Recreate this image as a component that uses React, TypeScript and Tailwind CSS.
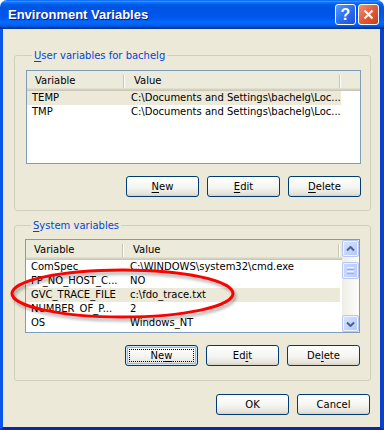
import React from "react"

const font = "font-['Tahoma','DejaVu_Sans',Verdana,sans-serif]"

interface Row {
  name: string
  value: string
  selected?: boolean
}

const userVars: Row[] = [
  { name: "TEMP", value: "C:\\Documents and Settings\\bachelg\\Loc...", selected: true },
  { name: "TMP", value: "C:\\Documents and Settings\\bachelg\\Loc..." },
]

const systemVars: Row[] = [
  { name: "ComSpec", value: "C:\\WINDOWS\\system32\\cmd.exe" },
  { name: "FP_NO_HOST_C...", value: "NO" },
  { name: "GVC_TRACE_FILE", value: "c:\\fdo_trace.txt", selected: true },
  { name: "NUMBER_OF_P...", value: "2" },
  { name: "OS", value: "Windows_NT" },
]

function Separator() {
  return <span className="absolute right-0 top-[4px] h-[13px] w-[2px] border-l border-[#c7c5b2] bg-white" />
}

function ListHeader() {
  return (
    <div className="flex h-[20px] leading-[19px] bg-[linear-gradient(to_bottom,#ebeadb_0,#ebeadb_17px,#e2decd_17px,#e2decd_18px,#d6d2c2_18px,#d6d2c2_19px,#cbc7b8_19px)]">
      <div className="relative w-[98px] pl-[8px]">
        Variable
        <Separator />
      </div>
      <div className="relative w-[216px] pl-[9px]">
        Value
        <Separator />
      </div>
      <div className="flex-1" />
    </div>
  )
}

function ListRows({ rows }: { rows: Row[] }) {
  return (
    <div className="flex flex-col">
      {rows.map(r => (
        <div
          key={r.name}
          className={`flex h-[14px] w-[314px] leading-[14px] ${r.selected ? "bg-[#ece9d8]" : ""}`}
        >
          <div className="w-[98px] overflow-hidden whitespace-nowrap pl-[5px]">{r.name}</div>
          <div className="w-[216px] overflow-hidden whitespace-nowrap pl-[6px]">{r.value}</div>
        </div>
      ))}
    </div>
  )
}

function ScrollButton({ down }: { down?: boolean }) {
  return (
    <div className="flex h-[17px] w-[17px] items-center justify-center rounded-[2px] border border-[#b7c9f2] bg-[linear-gradient(to_bottom_right,#d8e4fd,#c1d3fb_60%,#b2c6f5)] shadow-[inset_0_0_0_1px_#eef3fe]">
      <svg width="9" height="6" viewBox="0 0 9 6">
        <path
          d={down ? "M1 1.5 L4.5 5 L8 1.5" : "M1 4.5 L4.5 1 L8 4.5"}
          stroke="#4d6185"
          strokeWidth="2"
          fill="none"
        />
      </svg>
    </div>
  )
}

function Scrollbar() {
  return (
    <div className="flex w-[17px] flex-col bg-[linear-gradient(to_right,#eeede5,#fdfdfa)]">
      <ScrollButton />
      <div className="flex-1">
        <div className="mt-[5px] flex h-[17px] w-[17px] flex-col items-center justify-center gap-[1px] rounded-[2px] border border-[#b7c9f2] bg-[linear-gradient(to_right,#c9d8fc,#bccffb)] shadow-[inset_0_0_0_1px_#eef3fe]">
          <span className="h-px w-[7px] bg-[#eef3fe]" />
          <span className="h-px w-[7px] bg-[#8cb0f8]" />
          <span className="h-px w-[7px] bg-[#eef3fe]" />
          <span className="h-px w-[7px] bg-[#8cb0f8]" />
        </div>
      </div>
      <ScrollButton down />
    </div>
  )
}

function XPButton({ children, focused }: { children: React.ReactNode; focused?: boolean }) {
  return (
    <div
      className={`relative flex h-[21px] w-[73px] items-center justify-center rounded-[3px] border border-[#003c74] bg-[linear-gradient(to_bottom,#ffffff,#f4f4f0_55%,#e6e3da_88%,#d6d0c5)] leading-[13px] ${
        focused ? "shadow-[inset_0_0_0_1px_#cee7ff,inset_0_0_0_2px_#98b8ea]" : ""
      }`}
    >
      {focused && <span className="absolute inset-[3px] border border-dotted border-[#000]" />}
      <span>{children}</span>
    </div>
  )
}

function U({ children }: { children: React.ReactNode }) {
  return <span className="underline underline-offset-[2px]">{children}</span>
}

export default function App() {
  return (
    <div className={`relative h-[430px] w-[384px] overflow-hidden bg-white text-[10px] text-black ${font}`}>
      <div className="flex h-full flex-col">
        {/* Title bar */}
        <div className="flex h-[29px] items-center rounded-t-[7px] bg-[linear-gradient(to_bottom,#0058ee_0%,#3593ff_4%,#288eff_6%,#127dff_8%,#036ffc_10%,#0262ee_14%,#0057e5_20%,#0054e3_24%,#0055eb_56%,#005bf5_66%,#026afe_76%,#0062ef_86%,#0052d6_92%,#0040ab_94%,#003092_100%)] pl-[8px] pr-[5px]">
          <span className="flex-1 pt-[1px] font-['Trebuchet_MS','Liberation_Sans',Arial,sans-serif] text-[13px] font-bold text-white [text-shadow:1px_1px_0_#0a1883]">
            Environment Variables
          </span>
          <div className="flex gap-[2px]">
            <div className="flex h-[21px] w-[21px] items-center justify-center rounded-[3px] border border-white bg-[linear-gradient(to_bottom_right,#5a9bfd,#2d6ef3_50%,#1c4fd9)] font-['Liberation_Sans',Arial,sans-serif] text-[16px] font-bold leading-none text-white">
              ?
            </div>
            <div className="flex h-[21px] w-[21px] items-center justify-center rounded-[3px] border border-white bg-[linear-gradient(to_bottom_right,#f2917a,#e35a37_50%,#c6401c)]">
              <svg width="11" height="11" viewBox="0 0 11 11">
                <path d="M1.5 1.5 L9.5 9.5 M9.5 1.5 L1.5 9.5" stroke="#fff" strokeWidth="2.2" />
              </svg>
            </div>
          </div>
        </div>

        {/* Client area */}
        <div className="flex flex-1 flex-col border-b-[3px] border-l-[3px] border-r-[4px] border-b-[#0a27a8] border-l-[#0a56ea] border-r-[#0840d0] bg-[#ece9d8] pl-[11px] pr-[9px] pt-[20px]">
          {/* User variables */}
          <fieldset className="rounded-[3px] border border-[#d0d0bf] pb-[13px] pl-[11px] pr-[9px] pt-[8px]">
            <legend className="ml-[6px] px-[2px] leading-[13px] text-[#0046d5]">
              <U>U</U>ser variables for bachelg
            </legend>
            <div className="h-[94px] border border-[#7f9db9] bg-white">
              <ListHeader />
              <ListRows rows={userVars} />
            </div>
            <div className="mt-[12px] flex justify-end gap-[8px]">
              <XPButton>
                <U>N</U>ew
              </XPButton>
              <XPButton>
                <U>E</U>dit
              </XPButton>
              <XPButton>
                <U>D</U>elete
              </XPButton>
            </div>
          </fieldset>

          {/* System variables */}
          <fieldset className="mt-[8px] rounded-[3px] border border-[#d0d0bf] pb-[14px] pl-[10px] pr-[10px] pt-[7px]">
            <legend className="ml-[6px] px-[2px] leading-[13px] text-[#0046d5]">
              <U>S</U>ystem variables
            </legend>
            <div className="flex h-[94px] border border-[#7f9db9] bg-white">
              <div className="flex-1">
                <ListHeader />
                <ListRows rows={systemVars} />
              </div>
              <Scrollbar />
            </div>
            <div className="mt-[12px] flex justify-end gap-[8px]">
              <XPButton focused>
                Ne<U>w</U>
              </XPButton>
              <XPButton>
                Ed<U>i</U>t
              </XPButton>
              <XPButton>
                De<U>l</U>ete
              </XPButton>
            </div>
          </fieldset>

          {/* Dialog buttons */}
          <div className="mt-[13px] flex justify-end gap-[8px] pr-px">
            <XPButton>OK</XPButton>
            <XPButton>Cancel</XPButton>
          </div>
        </div>
      </div>

      {/* Red annotation ellipse drawn over the list */}
      <svg className="pointer-events-none absolute left-0 top-0" width="384" height="430">
        <defs>
          <filter id="blur" x="-20%" y="-60%" width="140%" height="220%">
            <feGaussianBlur stdDeviation="1.6" />
          </filter>
        </defs>
        <ellipse
          cx="124.5"
          cy="296.5"
          rx="110.5"
          ry="23.5"
          fill="none"
          stroke="#000"
          strokeOpacity="0.3"
          strokeWidth="3"
          filter="url(#blur)"
        />
        <ellipse cx="122.5" cy="293.5" rx="110.5" ry="23.5" fill="none" stroke="#f00" strokeWidth="3" />
      </svg>
    </div>
  )
}
